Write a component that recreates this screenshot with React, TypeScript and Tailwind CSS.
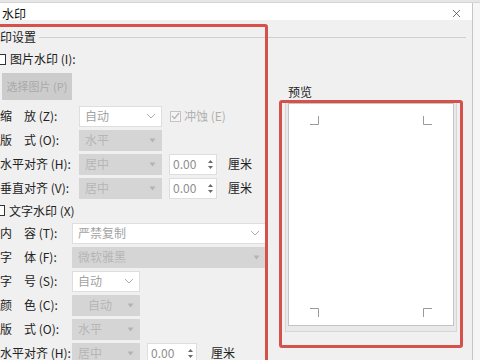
import { X } from 'lucide-react'

const FONT = "font-['Noto_Sans_CJK_SC','Microsoft_YaHei',sans-serif]"

function Chevron({ disabled }: { disabled?: boolean }) {
  if (disabled) {
    return (
      <svg width="7" height="5" viewBox="0 0 7 5" className="mr-[5px]">
        <path d="M0.5 0.5h6L3.5 4.5z" fill="#b4b4b4" />
      </svg>
    )
  }
  return (
    <svg width="10" height="6" viewBox="0 0 10 6" className="mr-[5px]">
      <path d="M1 1l4 4 4-4" fill="none" stroke="#b0b0b0" strokeWidth="1" />
    </svg>
  )
}

function Combo({
  w,
  text,
  disabled,
  center,
}: {
  w: string
  text: string
  disabled?: boolean
  center?: boolean
}) {
  return (
    <div
      className={`${w} h-[21px] flex items-center border ${
        disabled ? 'bg-[#d5d5d5] border-[#d5d5d5] text-[#b6b6b6]' : 'bg-white border-[#dedede] text-[#a3a3a3]'
      }`}
    >
      <span className={`flex-1 text-[12px] leading-none ${center ? 'text-center' : 'pl-[5px]'}`}>{text}</span>
      <Chevron disabled={disabled} />
    </div>
  )
}

function Spin({ w, ml }: { w: string; ml: string }) {
  return (
    <div className={`${w} ${ml} h-[21px] flex items-center bg-white border border-[#dedede]`}>
      <span className="flex-1 pl-[3px] text-[12px] leading-none text-[#8e8e8e]">0.00</span>
      <div className="flex flex-col items-center gap-[3px] mr-[3px]">
        <svg width="5" height="3" viewBox="0 0 5 3">
          <path d="M0 3L2.5 0L5 3z" fill="#6a6a6a" />
        </svg>
        <svg width="5" height="3" viewBox="0 0 5 3">
          <path d="M0 0L2.5 3L5 0z" fill="#6a6a6a" />
        </svg>
      </div>
    </div>
  )
}

function CheckBox({ checked, disabled, cls }: { checked?: boolean; disabled?: boolean; cls?: string }) {
  return (
    <div
      className={`w-[11px] h-[11px] border flex items-center justify-center ${
        disabled ? 'border-[#c4c4c4] bg-[#f4f4f4]' : 'border-[#333] bg-white'
      } ${cls ?? ''}`}
    >
      {checked && (
        <svg width="9" height="8" viewBox="0 0 9 8">
          <path d="M1 4l2.5 2.5L8 1" fill="none" stroke="#b5b5b5" strokeWidth="1.2" />
        </svg>
      )}
    </div>
  )
}

function Label({ w, children }: { w: string; children: string }) {
  return <span className={`${w} shrink-0 whitespace-pre text-[12px] leading-none text-[#222]`}>{children}</span>
}

function Row({ children, h = 'h-[24px]' }: { children: React.ReactNode; h?: string }) {
  return <div className={`${h} flex items-center`}>{children}</div>
}

function Corner({ d }: { d: string }) {
  return (
    <svg width="9" height="9" viewBox="0 0 9 9">
      <path d={d} fill="none" stroke="#9a9a9a" strokeWidth="1" />
    </svg>
  )
}

export default function App() {
  return (
    <div className={`relative w-[480px] h-[360px] overflow-hidden bg-[#f0f0f0] ${FONT}`}>
      <div className="h-[3px] bg-[#e6e6e6] border-b border-[#d6d6d6]" />
      <div className="flex h-[357px]">
        <div className="w-[473px] shrink-0 flex flex-col border-r border-[#c6c6c6]">
          {/* title bar */}
          <div className="h-[22px] bg-white flex items-center justify-between pl-[2px] pr-[9px] pt-[4px]">
            <span className="text-[12px] leading-none text-[#111]">水印</span>
            <X size={13} strokeWidth={1.3} className="text-[#333]" />
          </div>

          <div className="flex-1 flex flex-col pt-[10px]">
            {/* group header */}
            <div className="h-[14px] flex items-center pr-[6px]">
              <span className="text-[12px] leading-none text-[#222]">印设置</span>
              <div className="flex-1 h-px bg-[#cfcfcf] ml-[3px]" />
            </div>

            <div className="flex">
              {/* left form */}
              <div className="w-[270px] shrink-0 flex flex-col">
                <div className="h-[16px] mt-[7px] flex items-center">
                  <CheckBox cls="-ml-[5px]" />
                  <span className="ml-[4px] text-[12px] leading-none text-[#222]">图片水印 (I):</span>
                </div>
                <div className="mt-[6px] ml-[2px] w-[70px] h-[27px] bg-[#cccccc] flex items-center justify-center text-[11px] text-[#a9a9a9]">
                  选择图片 (P)
                </div>
                <div className="mt-[4px]" />
                <Row>
                  <Label w="w-[79px]">缩　放 (Z):</Label>
                  <Combo w="w-[83px]" text="自动" />
                  <CheckBox checked disabled cls="ml-[8px]" />
                  <span className="ml-[3px] text-[12px] leading-none text-[#b0b0b0]">冲蚀 (E)</span>
                </Row>
                <Row>
                  <Label w="w-[79px]">版　式 (O):</Label>
                  <Combo w="w-[83px]" text="水平" disabled />
                </Row>
                <Row>
                  <Label w="w-[79px]">水平对齐 (H):</Label>
                  <Combo w="w-[83px]" text="居中" disabled />
                  <Spin w="w-[48px]" ml="ml-[7px]" />
                  <span className="ml-[11px] text-[12px] leading-none text-[#222]">厘米</span>
                </Row>
                <Row>
                  <Label w="w-[79px]">垂直对齐 (V):</Label>
                  <Combo w="w-[83px]" text="居中" disabled />
                  <Spin w="w-[48px]" ml="ml-[7px]" />
                  <span className="ml-[11px] text-[12px] leading-none text-[#222]">厘米</span>
                </Row>
                <div className="h-[21px] flex items-center">
                  <CheckBox cls="-ml-[6px]" />
                  <span className="ml-[4px] text-[12px] leading-none text-[#222]">文字水印 (X)</span>
                </div>
                <Row>
                  <Label w="w-[72px]">内　容 (T):</Label>
                  <Combo w="w-[194px]" text="严禁复制" />
                </Row>
                <Row>
                  <Label w="w-[72px]">字　体 (F):</Label>
                  <Combo w="w-[194px]" text="微软雅黑" disabled />
                </Row>
                <Row>
                  <Label w="w-[72px]">字　号 (S):</Label>
                  <Combo w="w-[68px]" text="自动" />
                </Row>
                <Row>
                  <Label w="w-[72px]">颜　色 (C):</Label>
                  <Combo w="w-[68px]" text="自动" disabled center />
                </Row>
                <Row>
                  <Label w="w-[72px]">版　式 (O):</Label>
                  <Combo w="w-[68px]" text="水平" disabled />
                </Row>
                <Row>
                  <Label w="w-[72px]">水平对齐 (H):</Label>
                  <Combo w="w-[68px]" text="居中" disabled />
                  <Spin w="w-[50px]" ml="ml-[7px]" />
                  <span className="ml-[14px] text-[12px] leading-none text-[#222]">厘米</span>
                </Row>
              </div>

              {/* preview */}
              <div className="flex-1 flex flex-col pl-[18px]">
                <span className="mt-[42px] h-[14px] text-[12px] leading-none text-[#222]">预览</span>
                <div className="-ml-[3px] w-[172px] h-[232px] bg-[#e9e9e9] border border-[#d6d6d6] pl-[2px] pt-[2px]">
                  <div className="w-[166px] h-[223px] bg-white border border-[#c4c4c4] flex flex-col justify-between px-[21px] pt-[12px] pb-[8px]">
                    <div className="flex justify-between">
                      <Corner d="M0 8.5h8.5V0" />
                      <Corner d="M0.5 0v8.5H9" />
                    </div>
                    <div className="flex justify-between">
                      <Corner d="M0 0.5h8.5V9" />
                      <Corner d="M0.5 9V0.5H9" />
                    </div>
                  </div>
                </div>
              </div>
            </div>
          </div>
        </div>
        <div className="flex-1 bg-[#f6f6f6]" />
      </div>

      {/* red annotation boxes */}
      <div className="absolute left-[-4px] top-[24px] w-[272px] h-[360px] border-[3px] border-[#d5524c] rounded-[3px]" />
      <div className="absolute left-[279px] top-[100px] w-[184px] h-[248px] border-[3px] border-[#d5524c] rounded-[3px]" />
    </div>
  )
}
